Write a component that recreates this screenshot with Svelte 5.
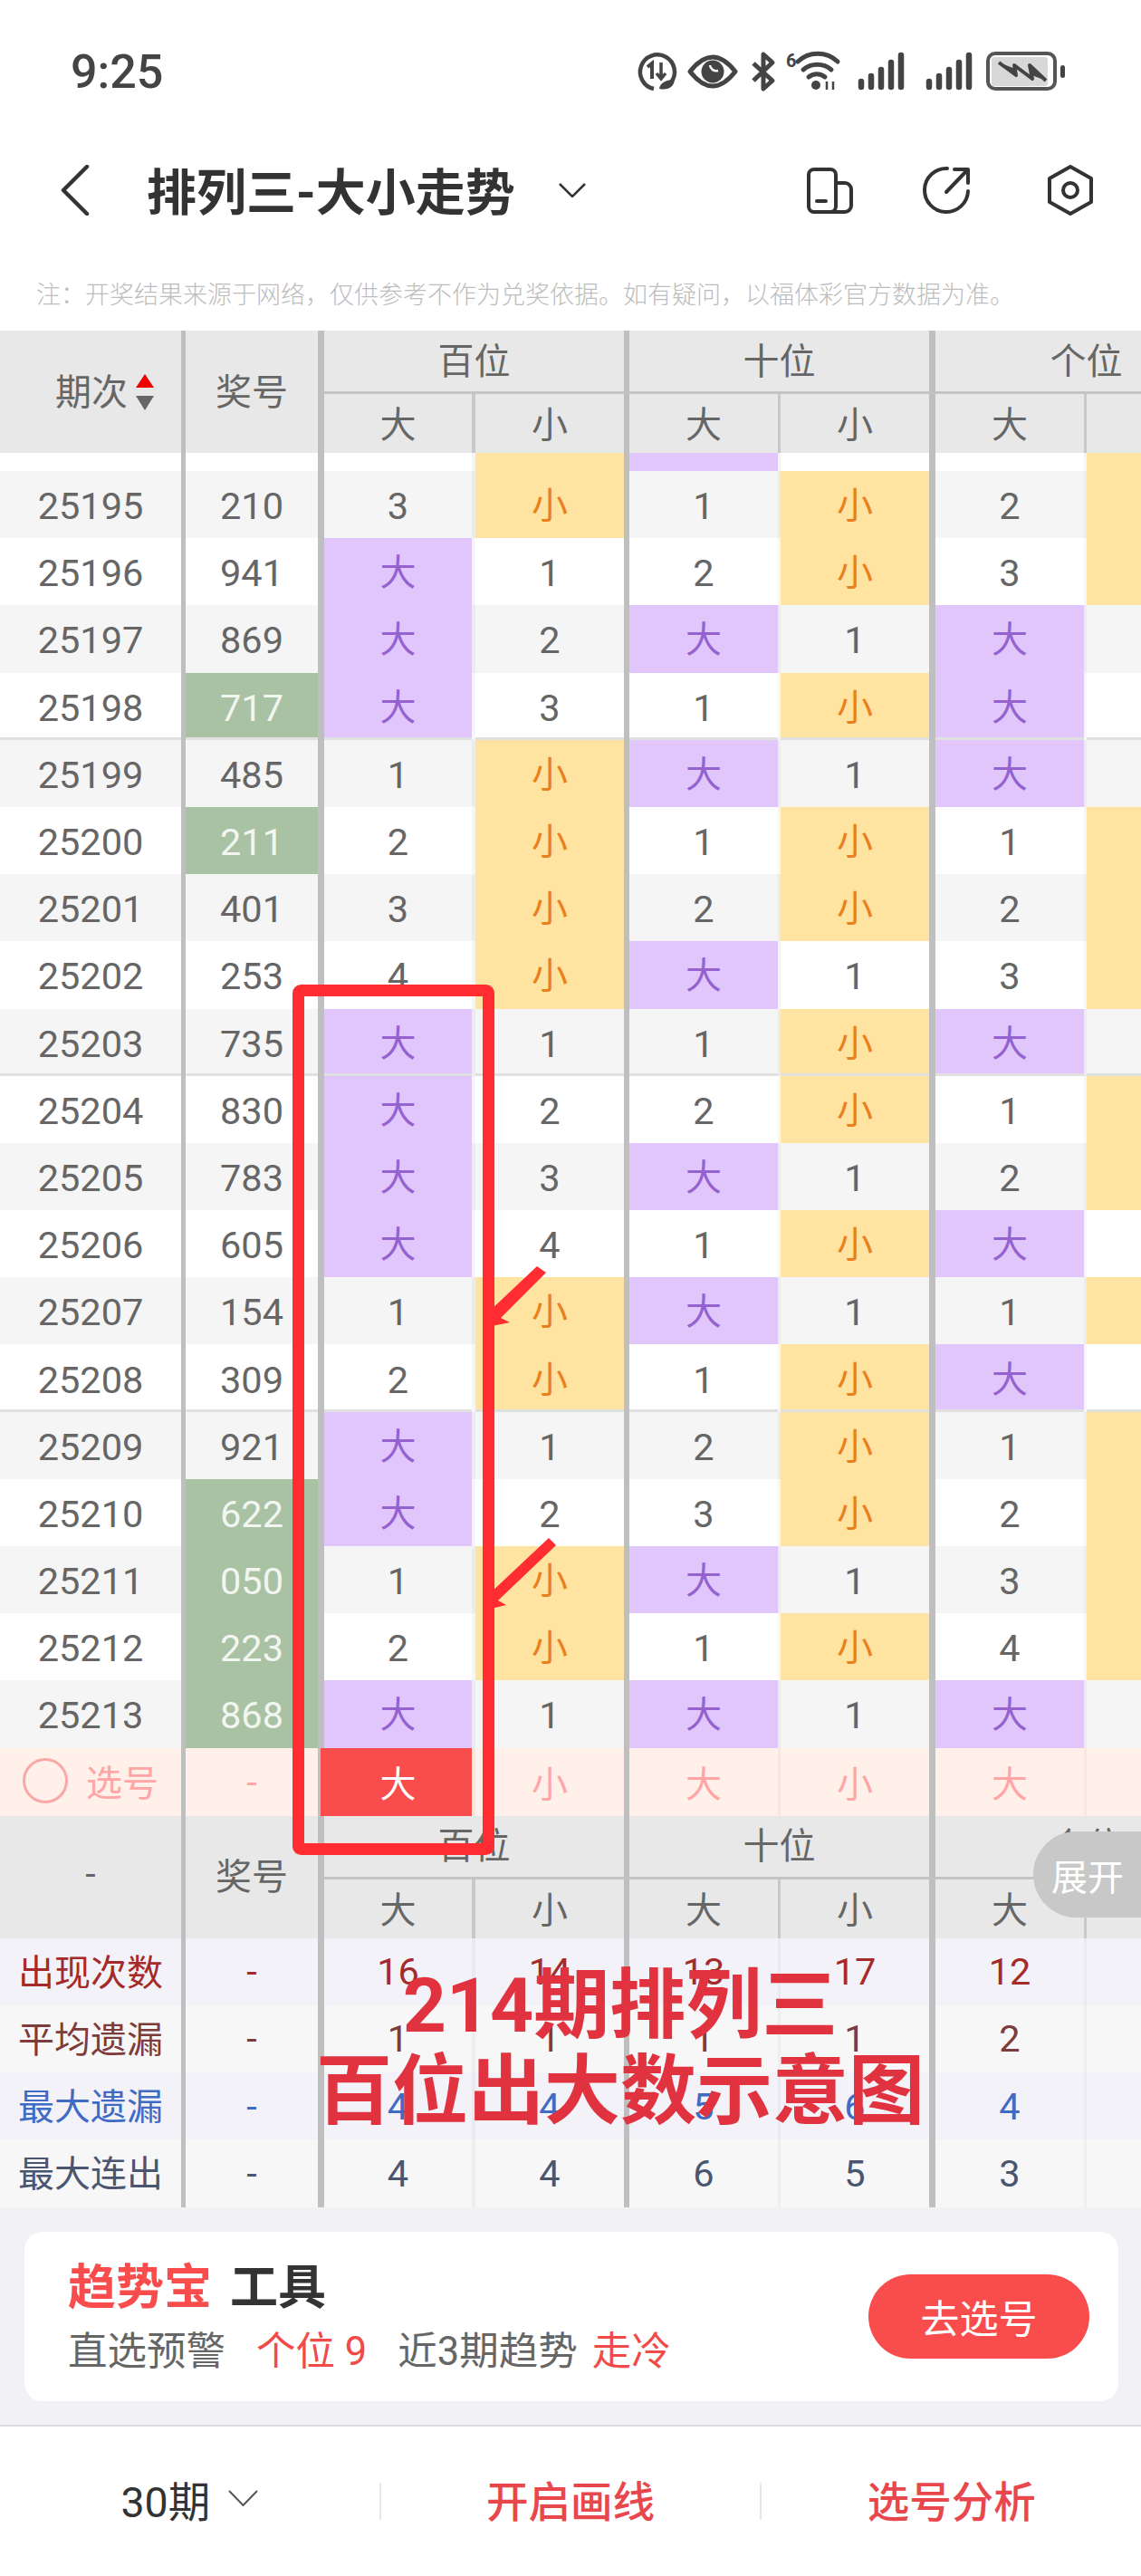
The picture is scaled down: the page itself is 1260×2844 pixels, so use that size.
<script lang="ts">
  // edge per column: bar or thin separator on the right of the cell
  const edges = ["e5", "e7", "t4", "e6", "t3", "e7", "t3", ""]

  const rows = [
    ["25195", "210", 0, "3", "小", "1", "小", "2", "小"],
    ["25196", "941", 0, "大", "1", "2", "小", "3", "小"],
    ["25197", "869", 0, "大", "2", "大", "1", "大", "1"],
    ["25198", "717", 1, "大", "3", "1", "小", "大", "2"],
    ["25199", "485", 0, "1", "小", "大", "1", "大", "3"],
    ["25200", "211", 1, "2", "小", "1", "小", "1", "小"],
    ["25201", "401", 0, "3", "小", "2", "小", "2", "小"],
    ["25202", "253", 0, "4", "小", "大", "1", "3", "小"],
    ["25203", "735", 0, "大", "1", "1", "小", "大", "1"],
    ["25204", "830", 0, "大", "2", "2", "小", "1", "小"],
    ["25205", "783", 0, "大", "3", "大", "1", "2", "小"],
    ["25206", "605", 0, "大", "4", "1", "小", "大", "1"],
    ["25207", "154", 0, "1", "小", "大", "1", "1", "小"],
    ["25208", "309", 0, "2", "小", "1", "小", "大", "1"],
    ["25209", "921", 0, "大", "1", "2", "小", "1", "小"],
    ["25210", "622", 1, "大", "2", "3", "小", "2", "小"],
    ["25211", "050", 1, "1", "小", "大", "1", "3", "小"],
    ["25212", "223", 1, "2", "小", "1", "小", "4", "小"],
    ["25213", "868", 1, "大", "1", "大", "1", "大", "1"],
  ]

  const groupEnds = ["25198", "25203", "25208"]

  const stats = [
    { label: "出现次数", cls: "s-red", vals: ["16", "14", "13", "17", "12", "18"] },
    { label: "平均遗漏", cls: "s-brown", vals: ["1", "1", "1", "1", "2", "1"] },
    { label: "最大遗漏", cls: "s-blue", vals: ["4", "4", "5", "6", "4", "3"] },
    { label: "最大连出", cls: "s-navy", vals: ["4", "4", "6", "5", "3", "5"] },
  ]

  const cellClass = (v) => (v === "大" ? "big" : v === "小" ? "small" : "")
  const sel = ["大", "小", "大", "小", "大", "小"]
</script>

{#snippet head(first)}
  <div class="head">
    <div class="hc e5 span2">{@render first()}</div>
    <div class="hc e7 span2">奖号</div>
    <div class="hc group e6">百位</div>
    <div class="hc group e7">十位</div>
    <div class="hc group">个位</div>
    <div class="hc sub th4">大</div>
    <div class="hc sub e6">小</div>
    <div class="hc sub th3">大</div>
    <div class="hc sub e7">小</div>
    <div class="hc sub th3">大</div>
    <div class="hc sub">小</div>
  </div>
{/snippet}

{#snippet sortTitle()}
  <span class="sort-title">期次
    <svg class="sort" width="20" height="40" viewBox="0 0 20 40">
      <path d="M10 0 20 15H0Z" fill="#ee0000" />
      <path d="M0 24H20L10 40Z" fill="#666" />
    </svg>
  </span>
{/snippet}

{#snippet dashTitle()}
  <span class="dash">-</span>
{/snippet}

<div class="page">
  <div class="status">
    <span class="time">9:25</span>
    <svg class="status-icons" width="480" height="56" viewBox="700 50 480 56" fill="none" stroke="#444">
      <path d="M741 90A19 19 0 1 0 722 97" stroke-width="4.5" />
      <path d="M715 73l5-4v17" stroke-width="4" />
      <path d="M730 68v17m-5-5 5 6 5-6" stroke-width="3.5" />
      <path d="M728 97c1-7 8-10 17-10-1 8-7 12-17 10Z" fill="#444" stroke="none" />

      <path d="M762 78Q787 46 812 78 787 110 762 78Z" stroke-width="5" stroke-linejoin="round" />
      <circle cx="787" cy="78" r="12.5" fill="#444" stroke="none" />
      <path d="M784 71a7 7 0 0 0 9 6" stroke="#fff" stroke-width="2.5" />

      <path d="M832 69 853 88 843 97V59L853 68 832 88" stroke-width="5" stroke-linejoin="round" />

      <text x="868" y="73" class="wifi-six" fill="#444" stroke="none">6</text>
      <path d="M881 67A32 32 0 0 1 925 67" stroke-width="5" stroke-linecap="round" />
      <path d="M887 76A24 24 0 0 1 918 76" stroke-width="5" stroke-linecap="round" />
      <path d="M893 84A14 14 0 0 1 911 84" stroke-width="5" stroke-linecap="round" />
      <circle cx="901" cy="93" r="5" fill="#444" stroke="none" />
      <path d="M913 98V89M920 98V89" stroke-width="2.5" />

      <g stroke-width="6.5" stroke-linecap="round">
        <path d="M951 89V95M962 83V95M973 76V95M984 68V95M995 60V95" />
        <path d="M1026 89V95M1037 83V95M1048 76V95M1059 68V95M1070 60V95" />
      </g>

      <rect x="1095" y="62" width="62" height="32" rx="3" fill="#d8d8d8" stroke="none" />
      <rect x="1091" y="58" width="74" height="39" rx="8" stroke="#555" stroke-width="4" />
      <path d="M1103 68 1122 82 1120 71 1140 86 1137 71 1155 88" stroke-width="4" fill="#444" stroke-linejoin="round" />
      <rect x="1171" y="71" width="5" height="14" rx="2.5" fill="#444" stroke="none" />
    </svg>
  </div>

  <div class="nav">
    <svg class="back" width="32" height="56" viewBox="0 0 32 56" fill="none" stroke="#333" stroke-width="4.5" stroke-linecap="round" stroke-linejoin="round">
      <path d="M29 2 3 28 29 54" />
    </svg>
    <h1>排列三-大小走势</h1>
    <svg class="caret" width="30" height="16" viewBox="0 0 30 16" fill="none" stroke="#333" stroke-width="2.5">
      <path d="M1 1 15 15 29 1" />
    </svg>
    <svg class="nav-icons" width="330" height="64" viewBox="885 180 330 64" fill="none" stroke="#333" stroke-width="4" stroke-linecap="round" stroke-linejoin="round">
      <rect x="893" y="189" width="30" height="47" rx="6" />
      <path d="M923 204H933A7 7 0 0 1 940 211V229A7 7 0 0 1 933 236H899" />
      <path d="M902 224H912" />
      <path d="M1046 188A24 24 0 1 0 1069 213" />
      <path d="M1045 214 1068 190M1054 189H1069V204" />
      <path d="M1182 186 1205 199V225L1182 238 1159 225V199Z" />
      <circle cx="1182" cy="212" r="8" />
    </svg>
  </div>

  <p class="note">注：开奖结果来源于网络，仅供参考不作为兑奖依据。如有疑问，以福体彩官方数据为准。</p>

  <div class="table">
    {@render head(sortTitle)}

    <div class="row stub">
      <div class="c e5"></div>
      <div class="c e7"></div>
      <div class="c t4"></div>
      <div class="c e6 small"></div>
      <div class="c t3 big"></div>
      <div class="c e7"></div>
      <div class="c t3"></div>
      <div class="c small"></div>
    </div>

    {#each rows as r, i}
      <div class="row" class:grey={i % 2 === 0} class:end={groupEnds.includes(r[0])}>
        <div class="c e5">{r[0]}</div>
        <div class="c e7" class:green={r[2]}>{r[1]}</div>
        {#each r.slice(3) as v, j}
          <div class="c {edges[j + 2]} {cellClass(v)}">{v}</div>
        {/each}
      </div>
    {/each}

    <div class="row pick">
      <div class="c e5 pick-label"><span class="ring"></span>选号</div>
      <div class="c e7">-</div>
      {#each sel as v, j}
        <div class="c {edges[j + 2]} pick-cell" class:picked={j === 0}>{v}</div>
      {/each}
    </div>

    {@render head(dashTitle)}

    {#each stats as s, i}
      <div class="row stat {s.cls}" class:tint={i % 2 === 0}>
        <div class="c e5 stat-label">{s.label}</div>
        <div class="c e7">-</div>
        {#each s.vals as v, j}
          <div class="c {edges[j + 2]}">{v}</div>
        {/each}
      </div>
    {/each}
  </div>

  <div class="tools">
    <div class="card">
      <div class="card-text">
        <div class="card-title"><span class="red">趋势宝</span><span>工具</span></div>
        <div class="card-sub">
          <span>直选预警</span>
          <span class="warn">个位 9</span>
          <span>近3期趋势</span>
          <span class="warn cold">走冷</span>
        </div>
      </div>
      <button class="go">去选号</button>
    </div>
  </div>

  <div class="bottom">
    <div class="tab period">30期
      <svg width="33" height="18" viewBox="0 0 33 18" fill="none" stroke="#555" stroke-width="2">
        <path d="M1 1 16.500 17 32 1" />
      </svg>
    </div>
    <div class="tab action">开启画线</div>
    <div class="tab action">选号分析</div>
  </div>

  <!-- hand-drawn annotations on top of the screenshot -->
  <svg class="marks" width="1260" height="2844" viewBox="0 0 1260 2844">
    <rect x="329.500" y="1093.500" width="210" height="948" rx="3" fill="none" stroke="#ff2d32" stroke-width="13" />
    <path d="M593 1398 603 1405 553 1455 563 1460 538 1465 540 1448Z" fill="#ff2d32" />
    <path d="M606 1698 614 1706 550 1767 559 1772 538 1777 540 1760Z" fill="#ff2d32" />
  </svg>

  <div class="caption">214期排列三<br />百位出大数示意图</div>
  <div class="expand">展开</div>
</div>

<style>
  :global(body) {
    margin: 0;
    background: #fff;
  }

  .page {
    position: relative;
    width: 1260px;
    height: 2844px;
    overflow: hidden;
    background: #fff;
    font-family: Roboto, "Noto Sans CJK SC", sans-serif;
    color: #666;
  }

  .status {
    display: flex;
    align-items: center;
    height: 158px;
    padding: 0 80px 0 78px;
    box-sizing: border-box;
  }

  .time {
    font-size: 52px;
    font-weight: 500;
    color: #444;
  }

  .status-icons {
    margin-left: auto;
  }

  .wifi-six {
    font-size: 20px;
    font-weight: 700;
  }

  .nav {
    display: flex;
    align-items: center;
    height: 104px;
    padding-left: 67px;
  }

  h1 {
    margin: 0 0 4px 63px;
    font-size: 55px;
    font-weight: 700;
    color: #333;
    white-space: nowrap;
  }

  .caret {
    margin-left: 48px;
  }

  .nav-icons {
    margin-left: auto;
    margin-right: 45px;
  }

  .note {
    margin: 0;
    height: 103px;
    padding: 44px 0 0 40px;
    box-sizing: border-box;
    font-size: 27px;
    line-height: 40px;
    font-weight: 300;
    color: #bdbdbd;
    white-space: nowrap;
  }

  .table {
    width: 1366px;
  }

  .head,
  .row {
    display: grid;
    grid-template-columns: 205px 153px 167px 170px 167px 171px 167px 166px;
  }

  .head {
    grid-template-rows: 70px 65px;
    background: #e8e8e8;
    font-size: 40px;
  }

  .hc {
    display: flex;
    align-items: center;
    justify-content: center;
    box-sizing: border-box;
    padding-bottom: 6px;
    color: #666;
  }

  .hc.sub {
    padding-bottom: 3px;
  }

  .span2 {
    grid-row: span 2;
  }

  .group {
    grid-column: span 2;
    border-bottom: 3px solid #c4c4c4;
  }

  .th4 {
    border-right: 4px solid #c8c8c8;
  }

  .th3 {
    border-right: 3px solid #c8c8c8;
  }

  .sort-title {
    display: flex;
    align-items: center;
    gap: 9px;
    padding-left: 31px;
  }

  .sort {
    margin-top: 6px;
  }

  .dash {
    font-size: 41px;
  }

  .e5 {
    border-right: 5px solid #bfbfbf;
  }

  .e6 {
    border-right: 6px solid #bfbfbf;
  }

  .e7 {
    border-right: 7px solid #bfbfbf;
  }

  .t4 {
    border-right: 4px solid rgba(0, 0, 0, 0.035);
  }

  .t3 {
    border-right: 3px solid rgba(0, 0, 0, 0.035);
  }

  .row {
    height: 74.200px;
    background: #fff;
  }

  .row.grey {
    background: #f5f5f5;
  }

  .row.stub {
    height: 20px;
  }

  .c {
    display: flex;
    align-items: center;
    justify-content: center;
    box-sizing: border-box;
    background-clip: padding-box;
    padding-top: 3px;
    font-size: 41.500px;
    color: #666;
    min-width: 0;
  }

  .row.end .c {
    box-shadow: inset 0 -3px 0 #e0e0e0;
  }

  .green {
    background-color: #a9c2a4;
    color: #f2f6f0;
  }

  .c.big {
    padding: 0 0 4px;
    background-color: #e1c6fc;
    color: #9462cf;
    font-size: 40px;
  }

  .c.small {
    padding: 0 0 4px;
    background-color: #ffe3a1;
    color: #e8801e;
    font-size: 40px;
  }

  .row.pick {
    height: 75px;
    background: #fff0ea;
  }

  .pick .c {
    padding: 0;
    color: #ffa5a5;
  }

  .c.pick-cell {
    font-size: 40px;
  }

  .pick .picked {
    background-color: #f94c4c;
    box-shadow: -4px 0 0 #f94c4c;
    color: #fff;
    border-right-color: rgba(0, 0, 0, 0.035);
  }

  .pick .pick-label {
    gap: 20px;
    padding-bottom: 2px;
    font-size: 40px;
  }

  .ring {
    width: 50px;
    height: 50px;
    border: 3px solid #f9a8a8;
    border-radius: 50%;
    box-sizing: border-box;
  }

  .row.stat {
    height: 74.250px;
    background: #f7f7f8;
  }

  .row.stat.tint {
    background: #f2f2f8;
  }

  .stat .c {
    padding: 0;
  }

  .stat .stat-label {
    padding-bottom: 4px;
    font-size: 40px;
  }

  .s-red .c {
    color: #a52a2a;
  }

  .s-brown .c {
    color: #7d3b3b;
  }

  .s-blue .c {
    color: #3f6bc4;
  }

  .s-navy .c {
    color: #4a5570;
  }

  .tools {
    height: 242px;
    padding: 27px 25px 26px 27px;
    box-sizing: border-box;
    background: #f2f2f6;
    border-bottom: 2px solid #ddd;
  }

  .card {
    display: flex;
    align-items: center;
    justify-content: space-between;
    height: 187px;
    padding: 0 32px 0 48px;
    box-sizing: border-box;
    background: #fff;
    border-radius: 20px;
  }

  .card-text {
    padding-top: 6px;
  }

  .card-title {
    display: flex;
    gap: 20px;
    font-size: 53px;
    line-height: 60px;
    font-weight: 700;
    color: #333;
  }

  .red {
    color: #f94c4c;
  }

  .card-sub {
    display: flex;
    margin-top: 13px;
    font-size: 43.500px;
    line-height: 55px;
    color: #666;
    white-space: nowrap;
  }

  .warn {
    margin: 0 34px 0 34px;
    color: #f04a4a;
  }

  .cold {
    margin: 0 0 0 16px;
  }

  .go {
    width: 244px;
    height: 93px;
    padding: 0;
    border: none;
    border-radius: 47px;
    background: #f94c4c;
    color: #fff;
    font-family: inherit;
    font-size: 43px;
  }

  .bottom {
    display: flex;
    align-items: center;
    height: 165px;
  }

  .tab {
    flex: 1;
    display: flex;
    align-items: center;
    justify-content: center;
    height: 41px;
    box-sizing: border-box;
    padding-bottom: 6px;
    font-size: 46.500px;
  }

  .tab + .tab {
    border-left: 2px solid #e8e8e8;
  }

  .period {
    gap: 20px;
    color: #333;
  }

  .action {
    color: #e8474c;
    font-weight: 500;
  }

  .marks {
    position: absolute;
    left: 0;
    top: 0;
    pointer-events: none;
  }

  .caption {
    position: absolute;
    left: 205px;
    top: 2167px;
    width: 960px;
    text-align: center;
    font-size: 84px;
    line-height: 95px;
    font-weight: 700;
    color: #e0333f;
  }

  .expand {
    position: absolute;
    right: 0;
    top: 2022px;
    display: flex;
    align-items: center;
    width: 119px;
    height: 95px;
    padding-left: 20px;
    box-sizing: border-box;
    border-radius: 48px 0 0 48px;
    background: #c8c8c8;
    color: #fff;
    font-size: 40px;
  }
</style>
